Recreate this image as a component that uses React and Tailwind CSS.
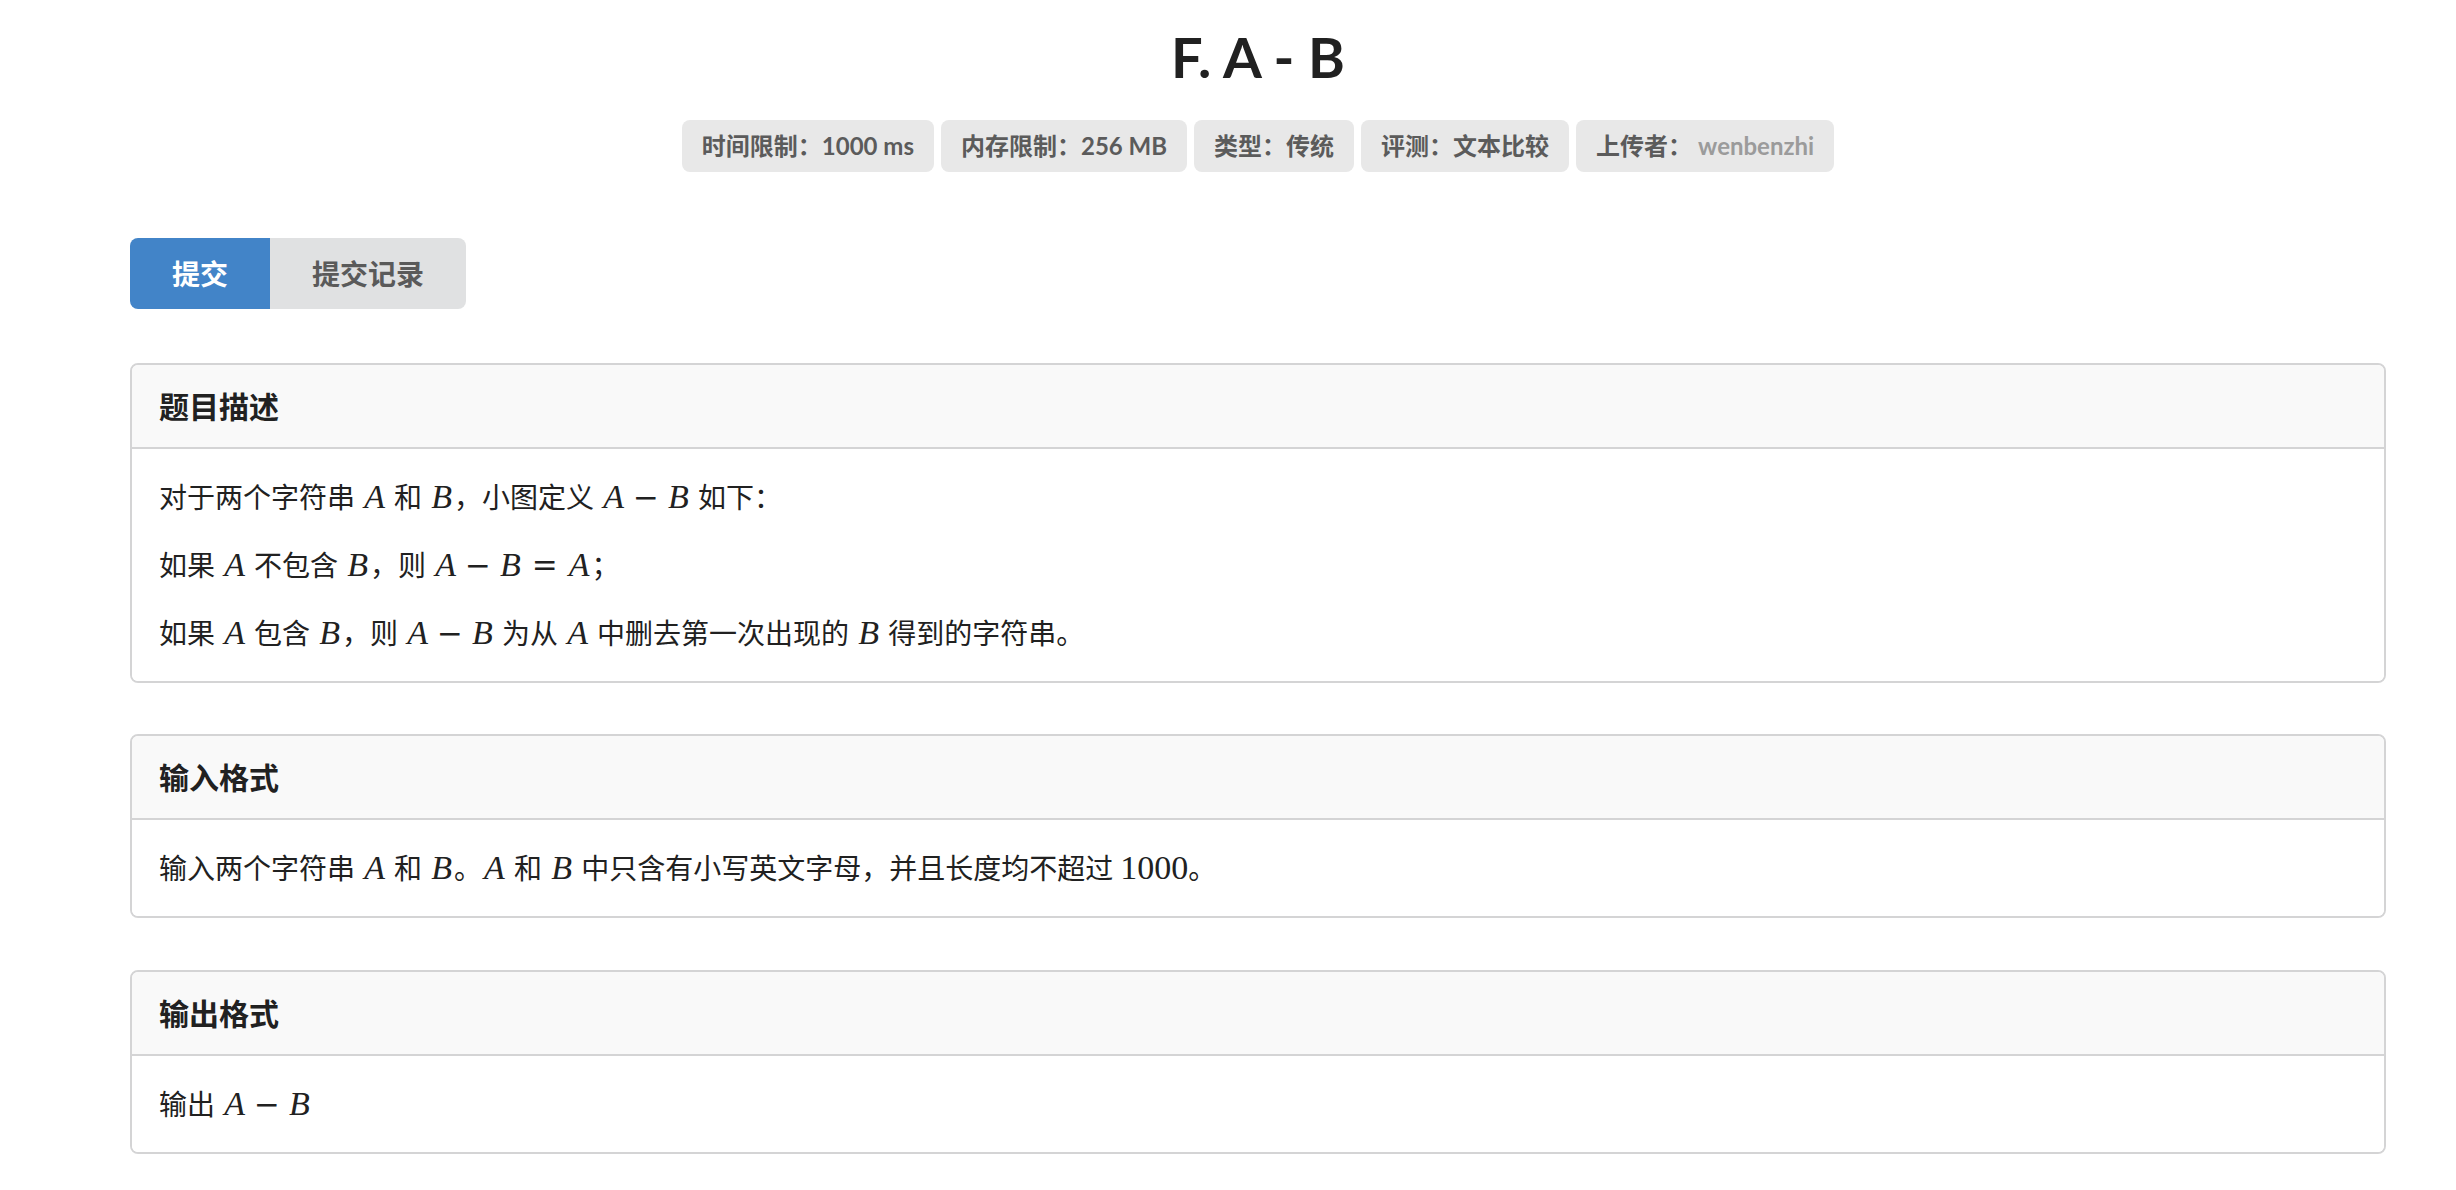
import React from 'react';

// math bits, roughly the look of KaTeX's italic letters
const V = ({ children }) => (
    <span className="font-['Liberation_Serif',serif] italic text-[34px] leading-[40px] px-[2px]">{children}</span>
);
const Num = ({ children }) => (
    <span className="font-['Liberation_Serif',serif] text-[34px] leading-[40px]">{children}</span>
);
const Op = ({ children }) => (
    <span className="font-['DejaVu_Serif',serif] font-light text-[31px] leading-[40px] mx-[7px]">{children}</span>
);
const Rel = ({ children }) => (
    <span className="font-['DejaVu_Serif',serif] font-light text-[31px] leading-[40px] mx-[9px]">{children}</span>
);

const AminusB = () => (
    <>
        <V>A</V><Op>−</Op><V>B</V>
    </>
);

const Label = ({ children }) => (
    <div className="bg-[#e8e8e8] text-[#5b5b5b] font-bold text-[24px] leading-[24px] px-[20px] py-[14px] rounded-[8px]">
        {children}
    </div>
);

const Section = ({ title, children, className }) => (
    <div className={`rounded-[8px] border-2 border-[#d4d4d5] ${className || ''}`}>
        <div className="bg-[#f9f9f9] border-b-2 border-[#d4d4d5] rounded-t-[6px] px-[27px] py-[22px] text-[30px] leading-[38px] font-bold text-[#212121]">
            {title}
        </div>
        <div className="bg-white rounded-b-[6px] px-[27px] pt-[28px] pb-[28px] text-[28px] leading-[40px] text-[#212121] space-y-[28px]">
            {children}
        </div>
    </div>
);

const App = () => {
    return (
        <div className="min-h-screen bg-white font-['Lato','Noto_Sans_CJK_SC',sans-serif] pl-[130px] pr-[70px] pb-[40px]">
            <h1 className="pt-[21px] text-center text-[56px] leading-[72px] font-bold text-[#212121]">F. A - B</h1>

            <div className="mt-[27px] flex justify-center gap-[7px]">
                <Label>时间限制：1000 ms</Label>
                <Label>内存限制：256 MB</Label>
                <Label>类型：传统</Label>
                <Label>评测：文本比较</Label>
                <Label>上传者：<span className="ml-[6px] text-[#9b9b9b]">wenbenzhi</span></Label>
            </div>

            <div className="mt-[66px] flex">
                <button className="h-[71px] px-[42px] bg-[#4284c8] text-white text-[28px] leading-[28px] font-bold rounded-l-[8px]">提交</button>
                <button className="h-[71px] px-[42px] bg-[#e0e1e2] text-[#5a5a5a] text-[28px] leading-[28px] font-bold rounded-r-[8px]">提交记录</button>
            </div>

            <Section title="题目描述" className="mt-[54px]">
                <p>对于两个字符串 <V>A</V> 和 <V>B</V>，小图定义 <AminusB /> 如下：</p>
                <p>如果 <V>A</V> 不包含 <V>B</V>，则 <AminusB /><Rel>=</Rel><V>A</V>；</p>
                <p>如果 <V>A</V> 包含 <V>B</V>，则 <AminusB /> 为从 <V>A</V> 中删去第一次出现的 <V>B</V> 得到的字符串。</p>
            </Section>

            <Section title="输入格式" className="mt-[51px]">
                <p>输入两个字符串 <V>A</V> 和 <V>B</V>。<V>A</V> 和 <V>B</V> 中只含有小写英文字母，并且长度均不超过 <Num>1000</Num>。</p>
            </Section>

            <Section title="输出格式" className="mt-[52px]">
                <p>输出 <AminusB /></p>
            </Section>
        </div>
    );
};

export default App;
